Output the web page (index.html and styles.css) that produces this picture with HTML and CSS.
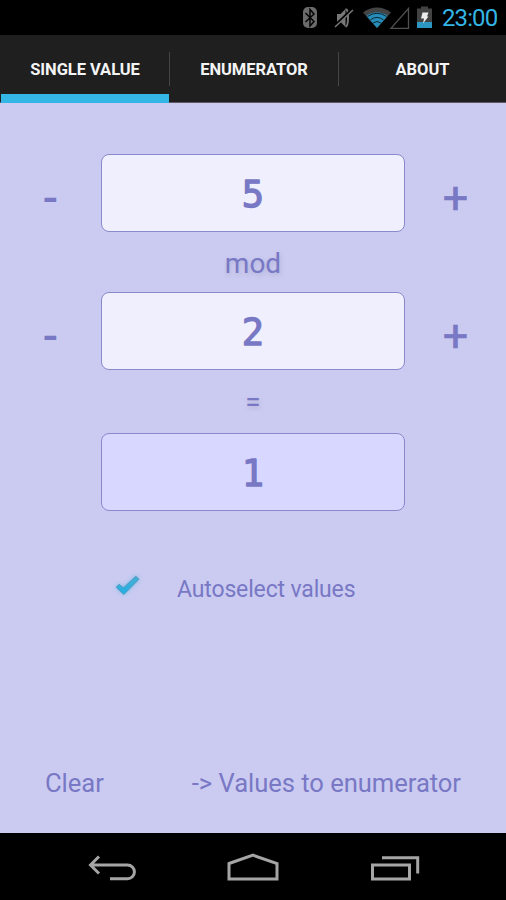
FILE: index.html
```
<!DOCTYPE html>
<html lang="en">
<head>
<meta charset="utf-8">
<title>Modulo</title>
<link rel="stylesheet" href="styles.css">
</head>
<body>
<div class="phone">
  <header class="status">
    <svg class="status-icons" width="136" height="35" viewBox="300 0 136 35">
      <rect x="303" y="7" width="14" height="21" rx="5" fill="#6b6b6b"/>
      <path d="M305.5 13l8.500 8.500-4 4.500V9.500l4 4.500-8.500 8" fill="none" stroke="#050505" stroke-width="1.500"/>
      <path d="M337 14h3.500l5-5v18l-5-5H337z" fill="#777"/>
      <path d="M345.500 9.500q2.500-1 2.500 8t-2.500 9" fill="none" stroke="#777" stroke-width="2"/>
      <path d="M334.500 26L352.500 9" stroke="#000" stroke-width="2.500"/>
      <path d="M335 27L353 10" stroke="#777" stroke-width="1.500"/>
      <path d="M363 12.500Q377 2.500 391 12.500L377 28z" fill="#444"/>
      <path d="M366.500 16Q377 8.500 387.500 16L377 28z" fill="#278cb8"/>
      <path d="M367.500 16.500Q377 10 386.500 16.500M370.500 19.800Q377 15 383.500 19.800M373 23Q377 20 381 23" fill="none" stroke="#031016" stroke-width=".8"/>
      <path d="M391 28.300H408.500V8.500z" fill="none" stroke="#505050" stroke-width="1.300"/>
      <path d="M417 8.500h4V6.500h7v2h4V22h-15z" fill="#424242"/>
      <path d="M417 22h15v6h-15z" fill="#2b96c2"/>
      <path d="M422.500 12.500h6l-1.500 4h1.500l-5.500 7 1-5h-3z" fill="#ececec"/>
    </svg>
    <span class="time">23:00</span>
  </header>
  <nav class="tabs">
    <div class="tab active">SINGLE VALUE</div>
    <div class="tab">ENUMERATOR</div>
    <div class="tab">ABOUT</div>
  </nav>
  <main class="content">
    <div class="row">
      <div class="step">-</div><div class="field"><svg class="digit" width="40" height="76"><text x="20" y="52">5</text></svg></div><div class="step plus">+</div>
    </div>
    <div class="operator mod">mod</div>
    <div class="row">
      <div class="step">-</div><div class="field"><svg class="digit" width="40" height="76"><text x="20" y="52">2</text></svg></div><div class="step plus">+</div>
    </div>
    <div class="operator equals">=</div>
    <div class="row">
      <div></div><div class="field result"><svg class="digit" width="40" height="76"><text x="20" y="52">1</text></svg></div><div></div>
    </div>
    <div class="auto">
      <svg class="check" width="34" height="34" viewBox="110 569 34 34">
        <defs><linearGradient id="blue" x1="0" y1="0" x2="0" y2="1"><stop offset="0" stop-color="#45aed5"/><stop offset="1" stop-color="#23b0e5"/></linearGradient></defs>
        <path d="M116.200 587.300L119 584.300L123.500 587.800L135.800 576.200L139 579.200L123.800 594.500z" fill="url(#blue)" stroke="#568eb2" stroke-width=".8"/>
      </svg>
      <span class="auto-label">Autoselect values</span>
    </div>
    <div class="actions"><span class="clear">Clear</span><span class="send">-&gt; Values to enumerator</span></div>
  </main>
  <footer class="nav">
    <svg width="506" height="67" viewBox="0 833 506 67" fill="none" stroke="#a5a5a5" stroke-width="3">
      <path d="M99 856.500L90.500 865L99 873.500M91 865H127.500A6.900 6.900 0 0 1 127.500 878.800H110"/>
      <path d="M229 863.500L253 855.200L277 863.500V879H229z"/>
      <path d="M372.500 865H409.500V879H372.500zM382 857.700H417.700V873.500"/>
    </svg>
  </footer>
</div>
</body>
</html>
```
FILE: styles.css
```
* { box-sizing: border-box; }
body { margin: 0; font-family: Roboto, "Liberation Sans", sans-serif; }
.phone { width: 506px; height: 900px; display: flex; flex-direction: column; background: #cbcbf1; color: #7878c5; overflow: hidden; }
.status { height: 35px; flex: none; display: flex; justify-content: flex-end; background: #000; padding-right: 8px; }
.status-icons { margin-right: 6px; }
.time { width: 56px; font-size: 24px; line-height: 37px; letter-spacing: -.9px; color: #33b5e5; white-space: nowrap; }
.tabs { height: 68px; flex: none; display: grid; grid-template-columns: 169px 169px 168px; background: #1f1f1f; border-bottom: 1px solid #615a66; }
.tab { position: relative; text-align: center; font-size: 16.5px; font-weight: 700; line-height: 69px; color: #f4f4f4; letter-spacing: -.05px; padding-left: 1px; height: 67px; }
.tab + .tab::before { content: ""; position: absolute; left: 0; top: 17px; width: 1px; height: 34px; background: #454545; }
.active::after { content: ""; position: absolute; left: 1px; right: 0; top: 59px; height: 9px; background: #33b5e5; }
.content { flex: 1; display: flex; flex-direction: column; padding-top: 51px; }
.row { height: 78px; flex: none; display: grid; grid-template-columns: 101px 304px 101px; grid-template-rows: 77.5px; }
.field { display: flex; justify-content: center; border: 1px solid #8989cc; border-radius: 8px; background: #efeffd; }
.digit { display: block; }
.digit text { font: 40px "DejaVu Sans Mono", monospace; font-size: 37px; text-anchor: middle; fill: #7878c5; stroke: #7878c5; stroke-width: 1.3px; stroke-linejoin: round; }
.result { background: #d7d7ff; }
.step { text-align: center; font-size: 45px; font-weight: 500; line-height: 87px; }
.plus { font-weight: 400; -webkit-text-stroke: .5px #7878c5; }
.operator { text-align: center; font-size: 28px; text-shadow: 1px 2px 4px #9999bb77; flex: none; }
.mod { height: 60px; line-height: 63px; }
.equals { height: 63px; line-height: 64px; }
.auto { flex: none; display: flex; align-items: center; height: 34px; margin: 58px 0 0 110px; }
.check { filter: drop-shadow(0 0 2px #70bce8); }
.auto-label { margin-left: 33px; padding-top: 8px; font-size: 23px; line-height: 30px; letter-spacing: -.15px; }
.actions { display: flex; justify-content: space-between; margin-top: auto; padding: 0 45px 33px; font-size: 25.6px; line-height: 34px; letter-spacing: -.05px; }
.nav { height: 67px; flex: none; background: #000; }
.nav svg { display: block; }
```
